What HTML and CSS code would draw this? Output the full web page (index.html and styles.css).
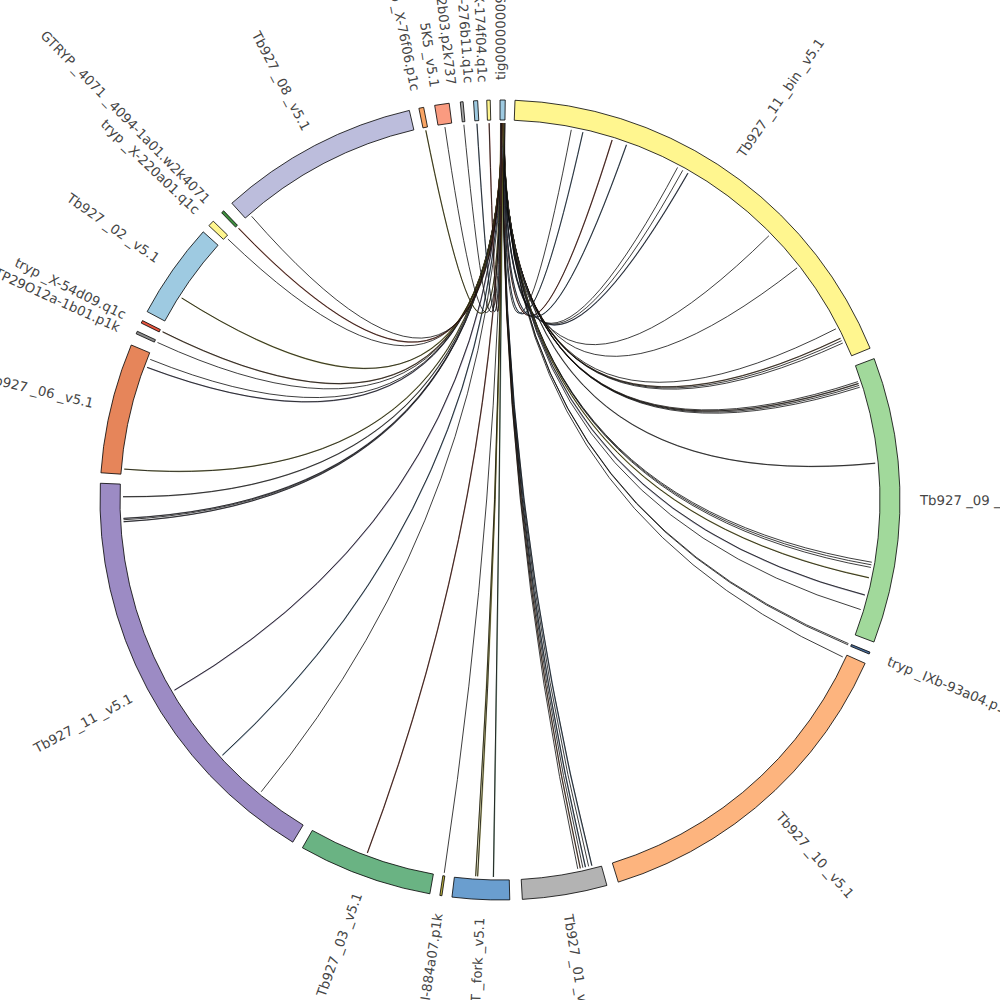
FILE: index.html
```html
<!DOCTYPE html>
<html>
<head>
<meta charset="utf-8">
<title>Circos links</title>
<link rel="stylesheet" href="styles.css">
</head>
<body>
<div class="canvas">
  <svg id="chart" class="chart" width="1000" height="1000" viewBox="0 0 1000 1000"></svg>
</div>
<script src="script.js"></script>
</body>
</html>
```

FILE: styles.css
```css
html, body {
  margin: 0;
  padding: 0;
  background: #ffffff;
}
.canvas {
  width: 1000px;
  height: 1000px;
  overflow: hidden;
}
.chart {
  display: block;
}
.seg {
  stroke: #000000;
  stroke-width: 0.8;
  stroke-linejoin: miter;
}
.link {
  fill: none;
  stroke: #0d0d0d;
  stroke-width: 0.8;
}
.link-tint {
  fill: none;
  stroke-width: 1.4;
  opacity: 0.6;
}
.label {
  font-family: "DejaVu Sans", "Liberation Sans", sans-serif;
  font-size: 13.3px;
  fill: #454545;
  dominant-baseline: central;
}
```

FILE: script.js
```js
(function () {
  var NS = "http://www.w3.org/2000/svg";
  var svg = document.getElementById("chart");
  var CX = 500, CY = 500, RI = 380, RO = 400, RL = 377;

  function pt(r, a) {
    var t = a * Math.PI / 180;
    return [CX + r * Math.sin(t), CY - r * Math.cos(t)];
  }
  function el(tag, attrs, cls, parent) {
    var e = document.createElementNS(NS, tag);
    for (var k in attrs) e.setAttribute(k, attrs[k]);
    if (cls) e.setAttribute("class", cls);
    (parent || svg).appendChild(e);
    return e;
  }

  var segs = [
    { n: "tig00000009", a1: 0.0, a2: 0.75, c: "#9ecae1", la: 0.1 },
    { n: "Tb927_11_bin_v5.1", a1: 2.15, a2: 67.7, c: "#fff68f" },
    { n: "Tb927_09_v5.1", a1: 69.3, a2: 110.8, c: "#a1d99b" },
    { n: "tryp_IXb-93a04.p1c", a1: 112.35, a2: 112.65, c: "#4a6f9f", la: 112.5 },
    { n: "Tb927_10_v5.1", a1: 114.1, a2: 162.8, c: "#fdb47e" },
    { n: "Tb927_01_v5.1", a1: 164.5, a2: 176.8, c: "#b3b3b3" },
    { n: "Tb927_BES_T_fork_v5.1", a1: 178.6, a2: 186.9, c: "#6a9ecf" },
    { n: "tryp_XI-884a07.p1k", a1: 188.35, a2: 188.65, c: "#b8ae40", la: 188.5 },
    { n: "Tb927_03_v5.1", a1: 190.1, a2: 209.6, c: "#6ab383" },
    { n: "Tb927_11_v5.1", a1: 211.2, a2: 272.4, c: "#9c8bc4" },
    { n: "Tb927_06_v5.1", a1: 273.9, a2: 292.8, c: "#e6855a" },
    { n: "tryp_TP29O12a-1b01.p1k", a1: 294.55, a2: 294.95, c: "#8c8c8c", la: 294.3 },
    { n: "tryp_X-54d09.q1c", a1: 296.25, a2: 296.65, c: "#e8553e", la: 296.2 },
    { n: "Tb927_02_v5.1", a1: 298.1, a2: 312.1, c: "#9ecae1" },
    { n: "tryp_X-220a01.q1c", a1: 313.3, a2: 314.2, c: "#fff68f", la: 313.6 },
    { n: "GTRYP_4071_4094-1a01.w2k4071", a1: 315.9, a2: 316.3, c: "#3f8f3f", la: 315.6 },
    { n: "Tb927_08_v5.1", a1: 317.9, a2: 346.9, c: "#bcbddc" },
    { n: "tryp_X-76f06.p1c", a1: 348.3, a2: 349.0, c: "#f9a565", la: 348.3 },
    { n: "5K5_v5.1", a1: 350.6, a2: 352.7, c: "#fa9b80", la: 351.0 },
    { n: "tryp_X-32b03.p2k737", a1: 354.3, a2: 354.7, c: "#a8a8a8", la: 353.3 },
    { n: "tryp_X-276b11.q1c", a1: 356.2, a2: 356.8, c: "#9ecae1", la: 355.7 },
    { n: "tryp_X-174f04.q1c", a1: 358.1, a2: 358.6, c: "#fff68f", la: 357.6 }
  ];

  var hub = [
    [10.9, null], [12.7, "#6a8fb0"], [17.3, "#9a3a2a"], [19.6, "#5a7a9a"], [28.1, null], [29.0, null], [29.9, "#4a5a7a"],
    [45.5, null], [52.0, null], [63.0, null], [64.6, "#8a6a4a"], [65.0, null], [65.4, null],
    [71.7, null], [72.0, "#5a4a3a"], [72.3, null], [72.6, null], [84.4, "#707070"],
    [99.5, null], [99.9, null], [100.3, null], [101.9, "#9a9430"], [104.6, "#6a6a8a"], [106.9, null],
    [112.4, null], [112.6, null], [114.6, null],
    [165.9, "#3a5a7a"], [166.4, null], [166.9, "#3a5a7a"], [167.3, null], [167.7, "#8a5a3a"], [168.1, null],
    [181.0, "#2a5a3a"], [183.4, "#9a9430"], [183.7, "#9a9430"],
    [188.5, null], [200.6, "#9a3a2a"],
    [219.3, null], [227.4, "#5a7fa0"], [239.7, "#7a6a9a"],
    [266.7, "#5a5a6a"], [267.0, null], [267.2, "#6a6a7a"], [270.5, "#7a7a7a"],
    [274.7, "#8a8a3a"], [290.6, "#6a6a8a"], [291.9, null],
    [294.7, null], [296.5, "#7a5a3a"], [302.4, "#8a8a2a"], [313.8, null], [316.1, "#a0402a"], [318.8, null]
  ];

  var loops = [
    [348.65, 0.10, "#9a9430"],
    [351.6, 0.12, null],
    [354.5, 0.15, null],
    [356.5, 0.18, "#5a7a9a"],
    [358.35, 0.22, "#9a3a2a"]
  ];

  var gLinks = el("g", {}, "links");
  var gSegs = el("g", {}, "ideograms");
  var gLabels = el("g", {}, "labels");

  function linkPath(a1, a2) {
    var p1 = pt(RL, a1), p2 = pt(RL, a2);
    return "M" + p1[0].toFixed(2) + " " + p1[1].toFixed(2) +
      " Q" + CX + " " + CY + " " + p2[0].toFixed(2) + " " + p2[1].toFixed(2);
  }
  function drawLink(a1, a2, tint) {
    var d = linkPath(a1, a2);
    if (tint) {
      var t = el("path", { d: d }, "link-tint", gLinks);
      t.style.stroke = tint;
    }
    el("path", { d: d }, "link", gLinks);
  }

  var HUB0 = 0.25, HUB1 = 0.72;
  var sorted = hub.slice().sort(function (a, b) { return a[0] - b[0]; });
  sorted.forEach(function (h, i) {
    var a = HUB1 - (HUB1 - HUB0) * i / (sorted.length - 1);
    drawLink(a, h[0], h[1]);
  });
  loops.forEach(function (x) { drawLink(x[0], x[1], x[2]); });

  function arcPts(r, a1, a2) {
    var n = Math.max(1, Math.ceil((a2 - a1) / 4));
    var out = [];
    for (var i = 0; i <= n; i++) out.push(pt(r, a1 + (a2 - a1) * i / n));
    return out;
  }
  segs.forEach(function (s) {
    var pts = arcPts(RO, s.a1, s.a2).concat(arcPts(RI, s.a1, s.a2).reverse());
    var str = pts.map(function (p) { return p[0].toFixed(2) + "," + p[1].toFixed(2); }).join(" ");
    var poly = el("polygon", { points: str }, "seg", gSegs);
    poly.style.fill = s.c;
  });

  segs.forEach(function (s) {
    var la = (s.la !== undefined) ? s.la : (s.a1 + s.a2) / 2;
    la = ((la % 360) + 360) % 360;
    var right = la < 180;
    var r = right ? 420 : 418;
    var p = pt(r, la);
    var rot = right ? la - 90 : la - 270;
    var t = el("text", {
      transform: "translate(" + p[0].toFixed(2) + " " + p[1].toFixed(2) + ") rotate(" + rot.toFixed(2) + ")",
      "text-anchor": right ? "start" : "end"
    }, "label", gLabels);
    t.textContent = s.n.replace(/_/g, " _");
  });
})();
```
